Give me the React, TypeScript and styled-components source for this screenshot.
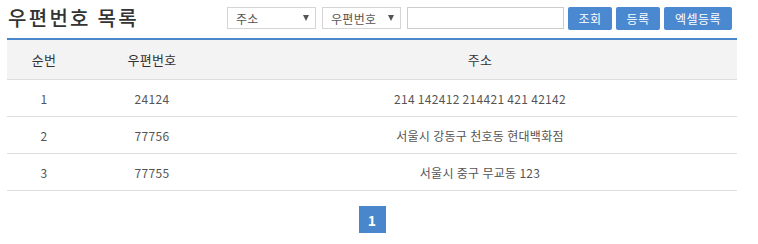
import React from 'react';
import styled, { createGlobalStyle } from 'styled-components';

const GlobalStyle = createGlobalStyle`
  body {
    margin: 0;
    background: #fff;
    font-family: 'Noto Sans CJK KR', 'Noto Sans', sans-serif;
    color: #333;
  }
`;

const Page = styled.div`
  width: 730px;
  padding: 7px 0 0 7px;
`;

const Toolbar = styled.div`
  display: flex;
  align-items: center;
  justify-content: space-between;
  height: 22px;
  padding-right: 5px;
`;

const Title = styled.h2`
  margin: 0 0 0 1px;
  font-size: 20px;
  font-weight: 500;
  letter-spacing: 2.3px;
  color: #333;
  line-height: 22px;
`;

const Controls = styled.div`
  display: flex;
  align-items: center;
  gap: 4px;
`;

const SelectBox = styled.div<{ $width: number }>`
  display: flex;
  align-items: center;
  justify-content: space-between;
  box-sizing: border-box;
  width: ${(p) => p.$width}px;
  height: 22px;
  padding: 0 6px 0 8px;
  margin-right: 2px;
  border: 1px solid #d5d5d5;
  background: #fff;
  font-size: 12px;
  letter-spacing: 0.3px;
  color: #555;
`;

const Arrow = styled.span`
  width: 0;
  height: 0;
  border-left: 3px solid transparent;
  border-right: 3px solid transparent;
  border-top: 6px solid #555;
`;

const SearchInput = styled.input`
  box-sizing: border-box;
  width: 157px;
  height: 22px;
  border: 1px solid #ccc;
  padding: 0 4px;
  font-size: 12px;
`;

const Button = styled.button<{ $width: number }>`
  box-sizing: border-box;
  width: ${(p) => p.$width}px;
  height: 23px;
  border: none;
  border-radius: 2px;
  background: #4a88d0;
  color: #fff;
  font-family: inherit;
  font-size: 12px;
  padding: 0;
  letter-spacing: 0.5px;
`;

const Table = styled.table`
  width: 730px;
  margin-top: 9px;
  border-collapse: collapse;
  border-top: 2px solid #4a86cc;
  font-size: 12px;
`;

const Th = styled.th<{ $width?: number }>`
  width: ${(p) => (p.$width ? `${p.$width}px` : 'auto')};
  height: 39px;
  padding: 0;
  background: #f3f3f3;
  border-bottom: 1px solid #ddd;
  font-size: 13px;
  font-weight: 400;
  letter-spacing: 0.3px;
  color: #333;
  text-align: center;
`;

const Td = styled.td`
  height: 36px;
  padding: 0;
  border-bottom: 1px solid #ddd;
  color: #555;
  letter-spacing: 0.3px;
  text-align: center;
`;

const Pager = styled.div`
  display: flex;
  justify-content: center;
  margin-top: 15px;
`;

const PageNum = styled.span`
  display: flex;
  align-items: center;
  justify-content: center;
  width: 27px;
  height: 27px;
  background: #4a86cc;
  color: #fff;
  font-size: 14px;
  font-weight: 700;
`;

const rows = [
  { no: 1, zip: '24124', addr: '214 142412 214421 421 42142' },
  { no: 2, zip: '77756', addr: '서울시 강동구 천호동 현대백화점' },
  { no: 3, zip: '77755', addr: '서울시 중구 무교동 123' },
];

export default function App() {
  return (
    <Page>
      <GlobalStyle />
      <Toolbar>
        <Title>우편번호 목록</Title>
        <Controls>
          <SelectBox $width={89}>
            <span>주소</span>
            <Arrow />
          </SelectBox>
          <SelectBox $width={79}>
            <span>우편번호</span>
            <Arrow />
          </SelectBox>
          <SearchInput type="text" />
          <Button $width={44}>조회</Button>
          <Button $width={44}>등록</Button>
          <Button $width={68}>엑셀등록</Button>
        </Controls>
      </Toolbar>
      <Table>
        <thead>
          <tr>
            <Th $width={74}>순번</Th>
            <Th $width={142}>우편번호</Th>
            <Th>주소</Th>
          </tr>
        </thead>
        <tbody>
          {rows.map((r) => (
            <tr key={r.no}>
              <Td>{r.no}</Td>
              <Td>{r.zip}</Td>
              <Td>{r.addr}</Td>
            </tr>
          ))}
        </tbody>
      </Table>
      <Pager>
        <PageNum>1</PageNum>
      </Pager>
    </Page>
  );
}
